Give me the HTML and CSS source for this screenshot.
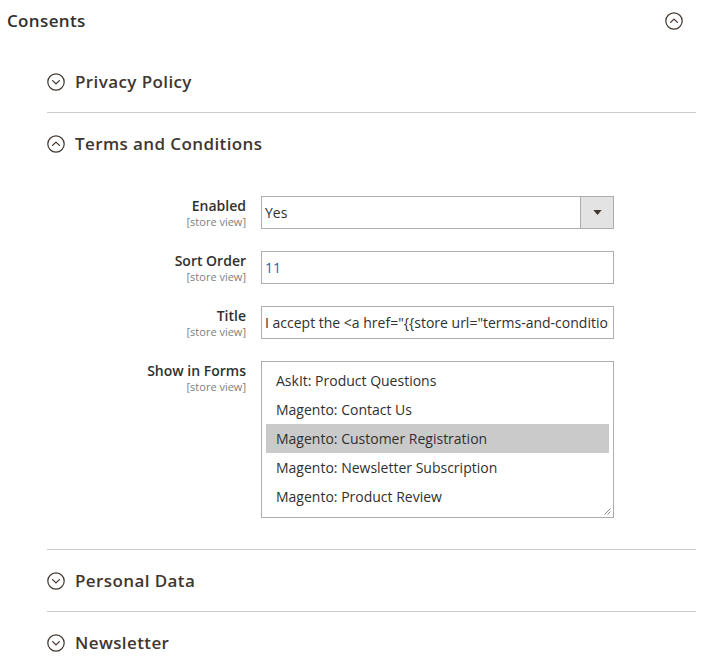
FILE: index.html
```html
<!DOCTYPE html>
<html>
<head>
<meta charset="utf-8">
<link rel="stylesheet" href="styles.css">
</head>
<body>
<div class="page">
  <div class="head">
    <span class="head-title">Consents</span>
    <svg class="chev" viewBox="0 0 18 18"><circle cx="9" cy="9" r="8.2"/><path d="M5.6 10.4 L9 7.1 L12.4 10.4"/></svg>
  </div>
  <div class="sections">
    <div class="section">
      <div class="sec-title">
        <svg class="chev" viewBox="0 0 18 18"><circle cx="9" cy="9" r="8.2"/><path d="M5.6 7.6 L9 10.9 L12.4 7.6"/></svg>
        <span>Privacy Policy</span>
      </div>
    </div>
    <div class="section">
      <div class="sec-title">
        <svg class="chev" viewBox="0 0 18 18"><circle cx="9" cy="9" r="8.2"/><path d="M5.6 10.4 L9 7.1 L12.4 10.4"/></svg>
        <span>Terms and Conditions</span>
      </div>
      <div class="form">
        <div class="row">
          <div class="label"><div class="lbl">Enabled</div><div class="scope">[store view]</div></div>
          <div class="control select">
            <span class="val">Yes</span>
            <span class="btn"><svg viewBox="0 0 10 6" width="9" height="5"><path d="M0 0 H10 L5 6 Z"/></svg></span>
          </div>
        </div>
        <div class="row">
          <div class="label"><div class="lbl">Sort Order</div><div class="scope">[store view]</div></div>
          <div class="control input"><span class="val num">11</span></div>
        </div>
        <div class="row">
          <div class="label"><div class="lbl">Title</div><div class="scope">[store view]</div></div>
          <div class="control input"><span class="val clip">I accept the &lt;a href="{{store url="terms-and-conditions"}}"&gt;Terms and Conditions&lt;/a&gt;</span></div>
        </div>
        <div class="row">
          <div class="label"><div class="lbl">Show in Forms</div><div class="scope">[store view]</div></div>
          <div class="control multi">
            <div class="opt">AskIt: Product Questions</div>
            <div class="opt">Magento: Contact Us</div>
            <div class="opt sel">Magento: Customer Registration</div>
            <div class="opt">Magento: Newsletter Subscription</div>
            <div class="opt">Magento: Product Review</div>
            <svg class="grip" viewBox="0 0 8 8" width="8" height="8"><path d="M7.5 1.5 L1.5 7.5 M7.5 4.5 L4.5 7.5"/></svg>
          </div>
        </div>
      </div>
    </div>
    <div class="section">
      <div class="sec-title">
        <svg class="chev" viewBox="0 0 18 18"><circle cx="9" cy="9" r="8.2"/><path d="M5.6 7.6 L9 10.9 L12.4 7.6"/></svg>
        <span>Personal Data</span>
      </div>
    </div>
    <div class="section">
      <div class="sec-title">
        <svg class="chev" viewBox="0 0 18 18"><circle cx="9" cy="9" r="8.2"/><path d="M5.6 7.6 L9 10.9 L12.4 7.6"/></svg>
        <span>Newsletter</span>
      </div>
    </div>
  </div>
</div>
</body>
</html>
```
FILE: styles.css
```css
html, body {
  margin: 0;
  padding: 0;
  background: #fff;
}
body {
  font-family: "Open Sans", "Noto Sans", sans-serif;
  color: #303030;
}
.page {
  width: 706px;
  height: 671px;
  overflow: hidden;
}
.head {
  display: flex;
  align-items: center;
  justify-content: space-between;
  height: 42px;
  padding: 0 23px 0 7px;
  margin-bottom: 9px;
}
.head-title {
  font-size: 17px;
  font-weight: 600;
  color: #303030;
  line-height: 24px;
  letter-spacing: 0.35px;
}
.chev {
  width: 18px;
  height: 18px;
  flex: none;
}
.chev circle, .chev path {
  fill: none;
  stroke: #41362f;
  stroke-width: 1.2;
}
.chev path {
  stroke-width: 1.3;
  stroke-linecap: round;
  stroke-linejoin: round;
}
.sections {
  margin: 0 10px 0 47px;
}
.section + .section {
  border-top: 1px solid #cccccc;
}
.sec-title {
  display: flex;
  align-items: center;
  gap: 10px;
  height: 61px;
  font-size: 17px;
  font-weight: 600;
  color: #41362f;
  letter-spacing: 0.4px;
}
.sec-title span {
  line-height: 24px;
}
.form {
  padding: 22px 0 31px;
  display: flex;
  flex-direction: column;
  gap: 22px;
}
.row {
  display: flex;
  gap: 15px;
}
.label {
  width: 199px;
  text-align: right;
  padding-top: 1px;
}
.lbl {
  font-size: 14px;
  font-weight: 600;
  line-height: 17px;
  color: #303030;
}
.scope {
  font-size: 11px;
  line-height: 14px;
  color: #808080;
  margin-top: 1px;
}
.control {
  width: 353px;
  box-sizing: border-box;
  border: 1px solid #adadad;
  background: #fff;
  font-size: 14px;
}
.input, .select {
  height: 33px;
  display: flex;
  align-items: center;
  overflow: hidden;
}
.val {
  padding-left: 3px;
  white-space: nowrap;
  line-height: 20px;
  flex: 1;
  overflow: hidden;
}
.clip {
  margin-right: 4px;
}
.num {
  color: #1f5fb0;
}
.btn {
  width: 33px;
  height: 100%;
  box-sizing: border-box;
  border-left: 1px solid #adadad;
  background: #e3e3e3;
  display: flex;
  align-items: center;
  justify-content: center;
}
.btn path {
  fill: #41362f;
}
.multi {
  height: 157px;
  padding: 4px;
  position: relative;
}
.opt {
  height: 29px;
  line-height: 29px;
  padding-left: 10px;
  white-space: nowrap;
}
.opt.sel {
  background: #cacaca;
}
.grip {
  position: absolute;
  right: 2px;
  bottom: 2px;
}
.grip path {
  stroke: #8a8a8a;
  stroke-width: 1;
  fill: none;
}
```
